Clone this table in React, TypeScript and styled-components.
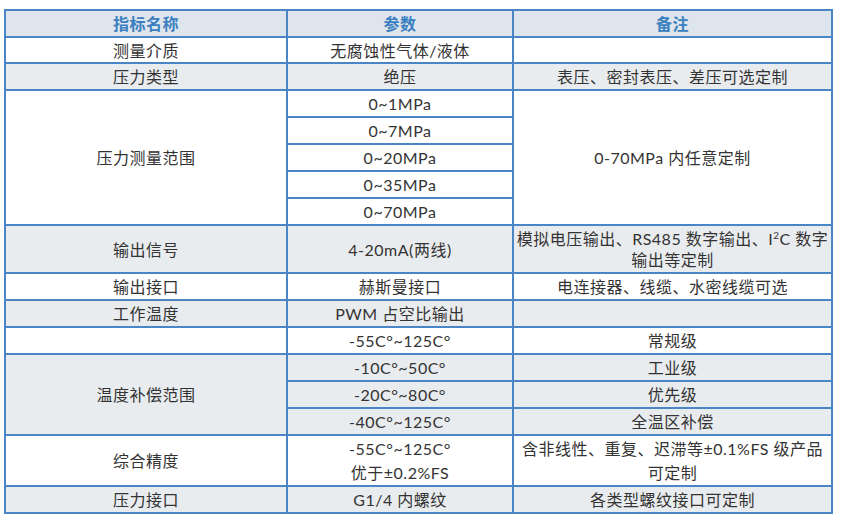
import styled, { createGlobalStyle } from "styled-components";

type Tone = "head" | "white" | "grey";

const GlobalStyle = createGlobalStyle`
  body {
    margin: 0;
    background: #ffffff;
    font-family: Lato, "Noto Sans CJK SC", "Noto Sans", sans-serif;
  }
`;

const toneBg: Record<Tone, string> = {
  head: "#dfe5ec",
  white: "#ffffff",
  grey: "#e9ecef",
};

export default function App() {
  return (
    <Page>
      <GlobalStyle />
      <SpecTable>
        <colgroup>
          <Col $w={282} />
          <Col $w={226} />
          <Col $w={319} />
        </colgroup>
        <thead>
          <Row $tone="head" $h={27}>
            <HeadCell>指标名称</HeadCell>
            <HeadCell>参数</HeadCell>
            <HeadCell>备注</HeadCell>
          </Row>
        </thead>
        <tbody>
          <Row $tone="white" $h={26}>
            <Cell>测量介质</Cell>
            <Cell>无腐蚀性气体/液体</Cell>
            <Cell />
          </Row>
          <Row $tone="grey" $h={27}>
            <Cell>压力类型</Cell>
            <Cell>绝压</Cell>
            <Cell>表压、密封表压、差压可选定制</Cell>
          </Row>
          <Row $tone="white" $h={27}>
            <Cell rowSpan={5}>压力测量范围</Cell>
            <Cell>0~1MPa</Cell>
            <Cell rowSpan={5}>0-70MPa 内任意定制</Cell>
          </Row>
          <Row $tone="white" $h={27}>
            <Cell>0~7MPa</Cell>
          </Row>
          <Row $tone="white" $h={27}>
            <Cell>0~20MPa</Cell>
          </Row>
          <Row $tone="white" $h={27}>
            <Cell>0~35MPa</Cell>
          </Row>
          <Row $tone="white" $h={27}>
            <Cell>0~70MPa</Cell>
          </Row>
          <Row $tone="grey" $h={48}>
            <Cell>输出信号</Cell>
            <Cell>4-20mA(两线)</Cell>
            <Cell>
              模拟电压输出、RS485 数字输出、I<Sup>2</Sup>C 数字
              <br />
              输出等定制
            </Cell>
          </Row>
          <Row $tone="white" $h={27}>
            <Cell>输出接口</Cell>
            <Cell>赫斯曼接口</Cell>
            <Cell>电连接器、线缆、水密线缆可选</Cell>
          </Row>
          <Row $tone="grey" $h={27}>
            <Cell>工作温度</Cell>
            <Cell>PWM 占空比输出</Cell>
            <Cell />
          </Row>
          <Row $tone="white" $h={27}>
            <Cell />
            <Cell>-55C°~125C°</Cell>
            <Cell>常规级</Cell>
          </Row>
          <Row $tone="grey" $h={27}>
            <Cell rowSpan={3}>温度补偿范围</Cell>
            <Cell>-10C°~50C°</Cell>
            <Cell>工业级</Cell>
          </Row>
          <Row $tone="grey" $h={27}>
            <Cell>-20C°~80C°</Cell>
            <Cell>优先级</Cell>
          </Row>
          <Row $tone="grey" $h={27}>
            <Cell>-40C°~125C°</Cell>
            <Cell>全温区补偿</Cell>
          </Row>
          <Row $tone="white" $h={51}>
            <Cell>综合精度</Cell>
            <Cell $tall>
              -55C°~125C°
              <br />
              优于±0.2%FS
            </Cell>
            <Cell $tall>
              含非线性、重复、迟滞等±0.1%FS 级产品
              <br />
              可定制
            </Cell>
          </Row>
          <Row $tone="grey" $h={27}>
            <Cell>压力接口</Cell>
            <Cell>G1/4 内螺纹</Cell>
            <Cell>各类型螺纹接口可定制</Cell>
          </Row>
        </tbody>
      </SpecTable>
    </Page>
  );
}

const Page = styled.div`
  padding: 9px 0 0 4px;
  width: 841px;
  height: 519px;
  box-sizing: border-box;
`;

const SpecTable = styled.table`
  border-collapse: collapse;
  table-layout: fixed;
  width: 827px;
  border: 2px solid #4a86c5;
`;

const Col = styled.col<{ $w: number }>`
  width: ${(p) => p.$w}px;
`;

const Row = styled.tr<{ $tone: Tone; $h: number }>`
  height: ${(p) => p.$h}px;
  background: ${(p) => toneBg[p.$tone]};
`;

const HeadCell = styled.th`
  border: 2px solid #4a86c5;
  padding: 0;
  font-size: 16px;
  line-height: 20px;
  font-weight: 700;
  letter-spacing: 0.5px;
  color: #3a80c0;
  text-align: center;
  vertical-align: middle;
`;

const Cell = styled.td<{ $tall?: boolean }>`
  border: 2px solid #4a86c5;
  padding: 0;
  font-size: 16px;
  line-height: ${(p) => (p.$tall ? 24 : 21)}px;
  letter-spacing: 0.5px;
  color: #333333;
  text-align: center;
  vertical-align: middle;
`;

const Sup = styled.sup`
  font-size: 10px;
  line-height: 0;
  vertical-align: 6px;
`;
